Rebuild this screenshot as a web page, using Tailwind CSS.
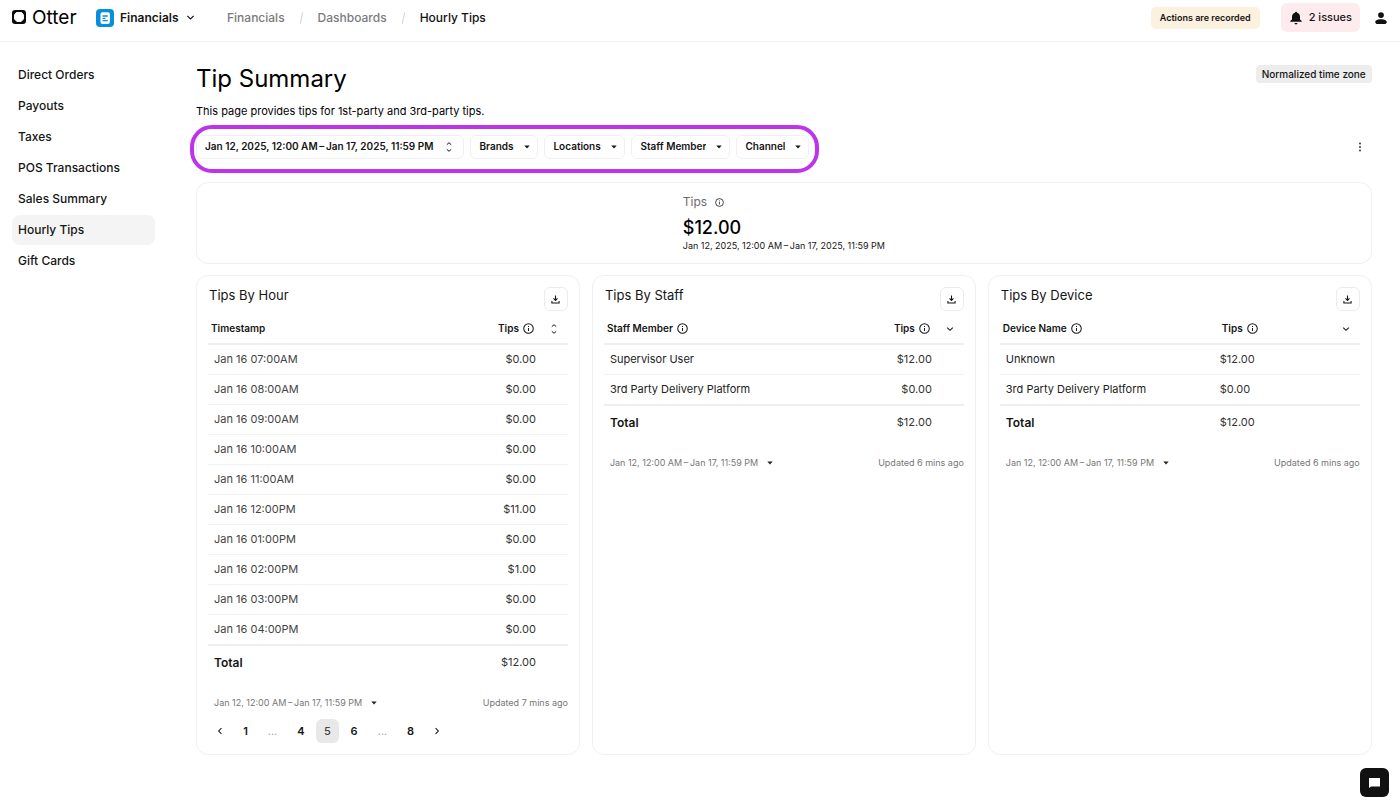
<!DOCTYPE html>
<html lang="en">
<head>
  <meta charset="UTF-8" />
  <meta name="viewport" content="width=device-width, initial-scale=1.0"/>
  <title>Tip Summary - Otter</title>
  <script src="https://cdn.jsdelivr.net/npm/@tailwindcss/browser@4"></script>
</head>
<body class="bg-white min-h-screen font-['Inter',sans-serif] text-[#151515] text-xs">

  <!-- shared icons -->
  <svg class="hidden">
    <symbol id="caret" viewBox="0 0 6 4"><path d="M0.3 0.4h5.4L3 3.4z" fill="currentColor"/></symbol>
    <symbol id="chevron" viewBox="0 0 10 10"><path d="M1.5 3.2 5 6.7 8.5 3.2" fill="none" stroke="currentColor" stroke-width="1.3"/></symbol>
    <symbol id="sort" viewBox="0 0 8 12"><path d="M1.8 3.7 4 1.7 6.2 3.7M1.8 8.3 4 10.3 6.2 8.3" fill="none" stroke="currentColor"/></symbol>
    <symbol id="info" viewBox="0 0 12 12"><circle cx="6" cy="6" r="5.2" fill="none" stroke="currentColor" stroke-width="1.1"/><path d="M6 5.4v3.2M6 3.3v1.1" stroke="currentColor" stroke-width="1.1"/></symbol>
    <symbol id="download" viewBox="0 0 10 10"><path d="M5 0.6v5M2.8 3.8 5 6l2.2-2.2M1 6.6v2.2h8V6.6" fill="none" stroke="currentColor" stroke-width="1.2"/></symbol>
  </svg>

  <header class="flex items-center h-[42px] pb-[6px] pl-3 pr-[13px] border-b border-[#f3f3f3] font-medium">
    <a href="#" class="flex items-center gap-[6px] w-[84px] text-[19px] font-normal text-black">
      <svg class="size-[14px]" viewBox="0 0 14 14"><rect width="14" height="14" rx="3" fill="#0b0b0b"/><path d="M4.3 2.6h5.4l1.7 2.2v4.3l-2.2 2.3H4.8L2.6 9.1V4.8z" fill="#fff" stroke="#fff" stroke-linejoin="round"/></svg>
      Otter
    </a>
    <button class="flex items-center w-[131px] font-semibold">
      <svg class="size-[18px] mr-[6px]" viewBox="0 0 18 18"><rect width="18" height="18" rx="4" fill="#068fdc"/><rect x="4.5" y="3.2" width="9.4" height="11.8" rx="2" fill="#fff"/><path d="M6.6 7h5.2M6.6 9.3h2.8M6.6 11.6h5.2" stroke="#068fdc" stroke-width="1.3"/></svg>
      Financials
      <svg class="size-[9px] ml-[7px]"><use href="#chevron"/></svg>
    </button>
    <nav aria-label="Breadcrumb" class="flex items-center gap-[15px] text-[#7b7b7b]">
      <a href="#">Financials</a>
      <svg class="w-[3px] h-3" viewBox="0 0 3 12"><path d="M2.7 0.3 0.3 11.7" stroke="#d2d2d2"/></svg>
      <a href="#">Dashboards</a>
      <svg class="w-[3px] h-3" viewBox="0 0 3 12"><path d="M2.7 0.3 0.3 11.7" stroke="#d2d2d2"/></svg>
      <a href="#" class="text-[#111]" aria-current="page">Hourly Tips</a>
    </nav>
    <span class="ml-auto px-[9px] h-[22px] leading-[22px] rounded-[5px] bg-[#fbf1de] text-[9px] font-semibold">Actions are recorded</span>
    <button class="flex items-center gap-[6px] ml-[21px] px-2 h-[29px] rounded-md bg-[#feebed] text-[11px] font-medium">
      <svg class="size-[14px]" viewBox="0 0 14 14" fill="#111"><path d="M7 .8c.6 0 1 .4 1 .9 1.9.5 3 2 3 4v2.8l1.8 1.6v.7H1.2v-.7L3 8.500V5.700c0-2 1.100-3.500 3-4 0-.5.400-.9 1-.9zM5.500 12h3c0 .8-.7 1.400-1.500 1.400S5.500 12.800 5.500 12z"/></svg>
      2 issues
    </button>
    <button aria-label="Account" class="ml-[15px]">
      <svg class="size-3" viewBox="0 0 12 12" fill="#111"><circle cx="6" cy="3.100" r="2.900"/><path d="M.3 12V9.800c0-1.700 3-2.600 5.700-2.600s5.700.9 5.700 2.600c0 1.300-.5 2.200-1.500 2.200H1.800C.8 12 .3 11.100.3 9.800z"/></svg>
    </button>
  </header>

  <div class="flex">
    <nav class="flex flex-col gap-px w-[196px] shrink-0 pl-3 pr-[41px] pt-[18px] font-medium leading-[30px]">
      <a href="#" class="px-[6px] rounded-lg">Direct Orders</a>
      <a href="#" class="px-[6px] rounded-lg">Payouts</a>
      <a href="#" class="px-[6px] rounded-lg">Taxes</a>
      <a href="#" class="px-[6px] rounded-lg">POS Transactions</a>
      <a href="#" class="px-[6px] rounded-lg">Sales Summary</a>
      <a href="#" class="px-[6px] rounded-lg bg-[#f4f4f4]">Hourly Tips</a>
      <a href="#" class="px-[6px] rounded-lg">Gift Cards</a>
    </nav>

    <main class="grow min-w-0 pr-7 pt-[22px] pb-12">
      <div class="flex items-start justify-between">
        <h1 class="text-2xl leading-[30px] font-normal text-black">Tip Summary</h1>
        <span class="px-[6px] h-[18px] leading-[18px] mt-px rounded bg-[#ededed] text-[10px] font-medium">Normalized time zone</span>
      </div>
      <p class="mt-[9px] leading-4 text-[11px] text-black">This page provides tips for 1st-party and 3rd-party tips.</p>

      <div class="flex items-center justify-between mt-4">
        <div class="relative flex gap-[6px] text-[10px] font-semibold">
          <button class="flex items-center gap-3 h-6 pl-2 pr-[10px] border border-[#f0f0f0] rounded-md">
            Jan 12, 2025, 12:00 AM&thinsp;–&thinsp;Jan 17, 2025, 11:59 PM
            <svg class="w-2 h-3"><use href="#sort"/></svg>
          </button>
          <label class="relative flex items-center">
            <select aria-label="Brands" class="appearance-none h-6 pl-2 pr-[23px] border border-[#f0f0f0] rounded-md"><option>Brands</option></select>
            <svg class="absolute right-2 w-[6px] h-1 pointer-events-none"><use href="#caret"/></svg>
          </label>
          <label class="relative flex items-center">
            <select aria-label="Locations" class="appearance-none h-6 pl-2 pr-[23px] border border-[#f0f0f0] rounded-md"><option>Locations</option></select>
            <svg class="absolute right-2 w-[6px] h-1 pointer-events-none"><use href="#caret"/></svg>
          </label>
          <label class="relative flex items-center">
            <select aria-label="Staff Member" class="appearance-none h-6 pl-2 pr-[23px] border border-[#f0f0f0] rounded-md"><option>Staff Member</option></select>
            <svg class="absolute right-2 w-[6px] h-1 pointer-events-none"><use href="#caret"/></svg>
          </label>
          <label class="relative flex items-center">
            <select aria-label="Channel" class="appearance-none h-6 pl-2 pr-[23px] border border-[#f0f0f0] rounded-md"><option>Channel</option></select>
            <svg class="absolute right-2 w-[6px] h-1 pointer-events-none"><use href="#caret"/></svg>
          </label>
          <!-- highlight around the filters -->
          <div class="absolute -left-[6px] -right-[10px] -top-[10px] -bottom-[14px] border-4 border-[#bd34eb] rounded-[22px] pointer-events-none"></div>
        </div>
        <button aria-label="More options" class="px-[10px]">
          <svg class="w-1 h-[10px]" viewBox="0 0 4 10" fill="#222"><circle cx="2" cy="1.500" r=".9"/><circle cx="2" cy="5" r=".9"/><circle cx="2" cy="8.500" r=".9"/></svg>
        </button>
      </div>

      <section class="flex justify-center mt-[23px] py-[11px] border border-[#f0f0f0] rounded-xl">
        <div>
          <h2 class="flex items-center gap-2 leading-4 text-[#6b6b6b]">Tips <svg class="size-[9px] text-[#222]"><use href="#info"/></svg></h2>
          <p class="mt-[6px] text-lg leading-6 font-medium text-black">$12.00</p>
          <p class="leading-3 text-[9px]">Jan 12, 2025, 12:00 AM&thinsp;–&thinsp;Jan 17, 2025, 11:59 PM</p>
        </div>
      </section>

      <div id="cards" class="grid grid-cols-3 gap-3 mt-[11px]"></div>
    </main>
  </div>

  <button aria-label="Open chat" class="fixed right-[11px] bottom-[11px] flex items-center justify-center size-[29px] rounded-md bg-[#111]">
    <svg class="w-[11px] h-[10px]" viewBox="0 0 11 10"><path d="M0 0h11v8.500H2L0 10z" fill="#fff"/></svg>
  </button>

  <script>
    const info = '<svg class="inline size-[11px] ml-1 mb-px"><use href="#info"/></svg>';
    const sortIcon = '<svg class="inline w-2 h-3"><use href="#sort"/></svg>';
    const chevron = '<svg class="inline size-2"><use href="#chevron"/></svg>';

    const cards = [
      {
        title: 'Tips By Hour', name: 'Timestamp', sort: sortIcon, total: '$12.00', updated: 'Updated 7 mins ago', color: 'text-[#444]',
        rows: [
          ['Jan 16 07:00AM', '$0.00'], ['Jan 16 08:00AM', '$0.00'], ['Jan 16 09:00AM', '$0.00'], ['Jan 16 10:00AM', '$0.00'],
          ['Jan 16 11:00AM', '$0.00'], ['Jan 16 12:00PM', '$11.00'], ['Jan 16 01:00PM', '$0.00'], ['Jan 16 02:00PM', '$1.00'],
          ['Jan 16 03:00PM', '$0.00'], ['Jan 16 04:00PM', '$0.00']
        ],
        pages: true
      },
      {
        title: 'Tips By Staff', name: 'Staff Member' + info, sort: chevron, total: '$12.00', updated: 'Updated 6 mins ago', color: 'text-[#222]',
        rows: [['Supervisor User', '$12.00'], ['3rd Party Delivery Platform', '$0.00']]
      },
      {
        title: 'Tips By Device', name: 'Device Name' + info, sort: chevron, total: '$12.00', updated: 'Updated 6 mins ago', color: 'text-[#222]',
        rows: [['Unknown', '$12.00'], ['3rd Party Delivery Platform', '$0.00']],
        left: true
      }
    ];

    const pager = `
      <nav aria-label="Pages" class="flex items-center mt-2 h-6 text-[11px] font-semibold text-center">
        <button aria-label="Previous page" class="w-6 flex justify-center"><svg class="size-2 rotate-90"><use href="#chevron"/></svg></button>
        <button class="w-[27px]">1</button>
        <span class="w-[27px] font-normal text-[#aaa]">...</span>
        <button class="w-[30px]">4</button>
        <button class="w-[23px] h-6 rounded-md bg-[#e8e8e8] font-medium text-[#444]" aria-current="page">5</button>
        <button class="w-[30px]">6</button>
        <span class="w-[27px] font-normal text-[#aaa]">...</span>
        <button class="w-[29px]">8</button>
        <button aria-label="Next page" class="w-6 flex justify-center"><svg class="size-2 -rotate-90"><use href="#chevron"/></svg></button>
      </nav>`;

    document.getElementById('cards').innerHTML = cards.map(card => {
      const align = card.left ? 'text-left pl-2' : 'text-right pr-2';
      const headAlign = card.left ? 'text-left pl-[10px]' : 'text-right pr-[10px]';
      return `
        <section class="min-h-[480px] px-[11px] pt-[11px] pb-[10px] border border-[#f0f0f0] rounded-xl">
          <div class="flex items-start justify-between h-[26px]">
            <h2 class="text-[13px] leading-4 pl-px">${card.title}</h2>
            <button aria-label="Download ${card.title}" class="flex items-center justify-center size-6 border border-[#ececec] rounded-md">
              <svg class="size-[9px]"><use href="#download"/></svg>
            </button>
          </div>
          <table class="w-full table-fixed text-[11px]">
            <colgroup><col><col class="${card.left ? 'w-[100px]' : 'w-[80px]'}"><col class="${card.left ? 'w-[48px]' : 'w-6'}"></colgroup>
            <thead>
              <tr class="h-[31px] border-b-2 border-[#eeeeee] text-[10px]">
                <th class="text-left font-semibold pt-px pl-[3px]">${card.name}</th>
                <th class="font-semibold pt-px ${headAlign}">Tips${info}</th>
                <th class="text-right pr-[10px]"><button aria-label="Sort by tips">${card.sort}</button></th>
              </tr>
            </thead>
            <tbody>
              ${card.rows.map(row => `
                <tr class="h-[30px] last:h-[31px] border-b border-[#f3f3f3]">
                  <td class="pl-[6px] ${card.color}">${row[0]}</td>
                  <td class="${align} text-[#333]">${row[1]}</td>
                  <td></td>
                </tr>`).join('')}
            </tbody>
            <tfoot>
              <tr class="h-[34px] border-t-2 border-[#eeeeee]">
                <th class="pl-[6px] text-left text-xs font-semibold">Total</th>
                <td class="${align} text-[#333]">${card.total}</td>
                <td></td>
              </tr>
            </tfoot>
          </table>
          <div class="flex items-center justify-between mt-4 pl-[6px] text-[9px] leading-4 text-[#777]">
            <label class="relative flex items-center">
              <select aria-label="Date range" class="appearance-none pr-[18px]"><option>Jan 12, 12:00 AM&thinsp;–&thinsp;Jan 17, 11:59 PM</option></select>
              <svg class="absolute right-1 w-[6px] h-1 text-[#222] pointer-events-none"><use href="#caret"/></svg>
            </label>
            <span>${card.updated}</span>
          </div>
          ${card.pages ? pager : ''}
        </section>`;
    }).join('');
  </script>
</body>
</html>
